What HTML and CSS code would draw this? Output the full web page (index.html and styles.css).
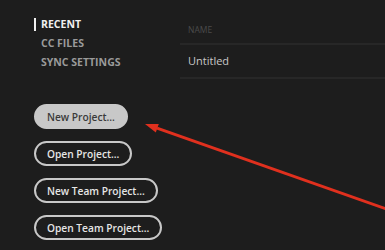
FILE: index.html
```html
<!DOCTYPE html>
<html lang="en">

<head>
    <meta charset="UTF-8" />
    <meta name="viewport" content="width=device-width, initial-scale=1" />
    <title>Start</title>
    <link rel="stylesheet" href="styles.css">
</head>

<body>
    <div class="start">
        <aside class="sidebar">
            <nav class="nav">
                <a class="nav-item active">RECENT</a>
                <a class="nav-item">CC FILES</a>
                <a class="nav-item">SYNC SETTINGS</a>
            </nav>

            <div class="actions">
                <button class="btn primary">New Project...</button>
                <button class="btn">Open Project...</button>
                <button class="btn">New Team Project...</button>
                <button class="btn">Open Team Project...</button>
            </div>
        </aside>

        <section class="recent">
            <div class="recent-head">NAME</div>
            <div class="recent-row">Untitled</div>
        </section>
    </div>

    <!-- annotation arrow -->
    <svg class="arrow" width="385" height="250" viewBox="0 0 385 250">
        <line x1="157" y1="128.2" x2="392" y2="211" stroke="#e0301e" stroke-width="3" />
        <polygon points="145,124 155.8,132.6 158.8,124.1" fill="#e0301e" />
    </svg>
</body>

</html>
```

FILE: styles.css
```css
:root {
    --bg: #1d1d1d;
    --line: #272727;
    --white: #f0f0f0;
    --muted: #9a9a9a;
    --pill: #c8c8c8;
}

body {
    margin: 0;
    background-color: var(--bg);
    font-family: 'Open Sans', sans-serif;
    overflow: hidden;
}

.start {
    display: flex;
    height: 250px;
}

.sidebar {
    width: 146px;
    padding-left: 34px;
    flex-shrink: 0;
}

.nav {
    display: flex;
    flex-direction: column;
    gap: 6px;
    padding-top: 18px;
}

.nav-item {
    font-size: 10.5px;
    font-weight: 700;
    line-height: 13px;
    color: var(--muted);
    padding-left: 7px;
}

.nav-item.active {
    color: var(--white);
    border-left: 2px solid var(--white);
    padding-left: 5px;
}

.actions {
    display: flex;
    flex-direction: column;
    align-items: flex-start;
    gap: 12px;
    margin-top: 35px;
}

.btn {
    height: 25px;
    padding: 0 11px;
    border: 2px solid var(--pill);
    border-radius: 13px;
    background: transparent;
    color: #e6e6e6;
    font-family: 'Open Sans', sans-serif;
    font-size: 10.2px;
    font-weight: 600;
    white-space: nowrap;
}

.btn.primary {
    background-color: var(--pill);
    color: #3a3a3a;
}

.recent {
    flex: 1;
}

.recent-head {
    padding: 24px 8px 7px;
    line-height: 12px;
    font-size: 8.5px;
    color: #4b4b4b;
    border-bottom: 2px solid var(--line);
}

.recent-row {
    padding: 0 8px;
    line-height: 32px;
    font-size: 11px;
    color: #c8c8c8;
    border-bottom: 2px solid var(--line);
}

.arrow {
    position: absolute;
    top: 0;
    left: 0;
}
```
